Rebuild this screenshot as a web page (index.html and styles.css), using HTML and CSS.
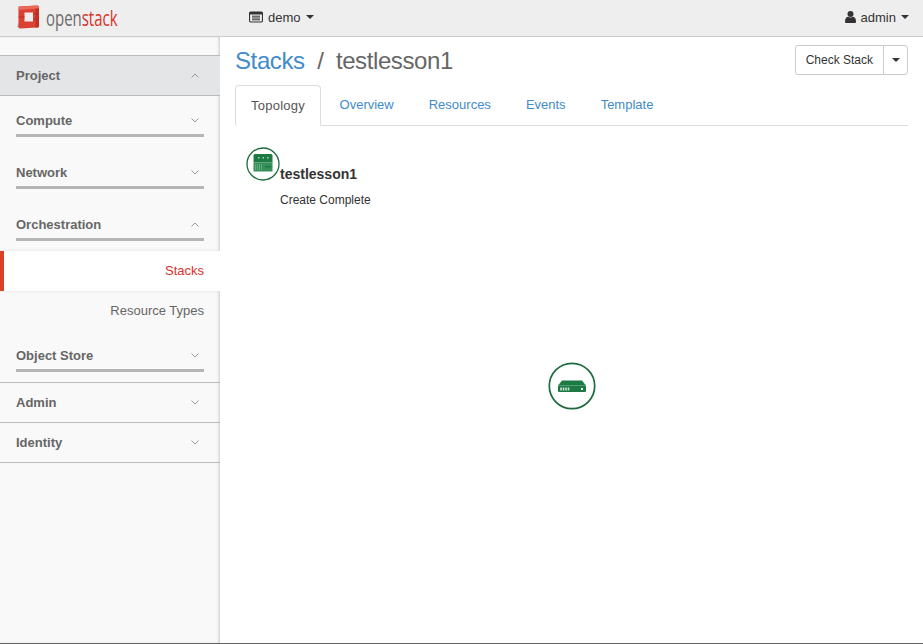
FILE: index.html
```html
<!DOCTYPE html>
<html lang="en">
<head>
    <meta charset="UTF-8">
    <meta name="viewport" content="width=device-width, initial-scale=1.0">
    <title>Stack Details - OpenStack Dashboard</title>
    <link rel="stylesheet" href="styles.css">
</head>
<body>
    <header class="navbar">
        <a class="brand" href="#">
            <svg class="brand-logo" width="24" height="24" viewBox="0 0 24 24">
                <path d="M1 22 L3 17 L5 23 Z" fill="#b5b5b5"/>
                <path fill-rule="evenodd" d="M2.500 2.500 Q2.500 1.500 3.500 1.500 L21 0.500 Q23 0.500 23 2 V21 Q23 22.500 21 22.500 L4.500 23.500 Q2.500 23.500 2.500 22 Z M8.500 7.500 V16.500 H17 V7.500 Z" fill="#da4133"/>
                <path d="M2.500 2.500 Q2.500 1.500 3.500 1.500 L21 0.500 Q23 0.500 23 2 V3.500 L2.500 5 Z" fill="#e96a5c"/>
                <path d="M19.500 3.500 H23 V21 Q23 22.500 21 22.500 L19.500 22.600 Z" fill="#c22f25"/>
                <path d="M2.500 12 H8.500 M17 9 H23 M17 14 H23" stroke="#b82c22" stroke-width="1"/>
            </svg>
            <span class="brand-name">open<span class="brand-accent">stack</span></span>
        </a>
        <div class="nav-project">
            <svg class="server-icon" width="14" height="12" viewBox="0 0 14 12">
                <rect x="0.5" y="1" width="13" height="10" rx="1.5" fill="none" stroke="#333" stroke-width="1.2"/>
                <rect x="1" y="1" width="12" height="2.5" fill="#333"/>
                <path d="M3 5.2 H11 M3 7 H11 M3 8.800 H11" stroke="#333" stroke-width="1"/>
            </svg>
            <span>demo</span>
            <span class="caret"></span>
        </div>
        <div class="nav-user">
            <svg class="user-icon" width="11" height="12" viewBox="0 0 11 12">
                <circle cx="5.500" cy="3" r="3" fill="#333"/>
                <path d="M0 11 Q0 6 3 5.800 Q5.500 7.400 8 5.800 Q11 6 11 11 Q11 12 10 12 H1 Q0 12 0 11 Z" fill="#333"/>
            </svg>
            <span>admin</span>
            <span class="caret"></span>
        </div>
    </header>

    <div class="page">
        <nav class="sidebar">
            <div class="dash-head">
                <span>Project</span>
                <svg class="chev" width="8" height="5" viewBox="0 0 8 5"><path d="M0.500 4.500 L4 1 L7.500 4.500" fill="none" stroke="#999" stroke-width="1"/></svg>
            </div>
            <div class="panel-head first">
                <span>Compute</span>
                <svg class="chev" width="8" height="5" viewBox="0 0 8 5"><path d="M0.500 0.500 L4 4 L7.500 0.500" fill="none" stroke="#999" stroke-width="1"/></svg>
            </div>
            <div class="panel-head">
                <span>Network</span>
                <svg class="chev" width="8" height="5" viewBox="0 0 8 5"><path d="M0.500 0.500 L4 4 L7.500 0.500" fill="none" stroke="#999" stroke-width="1"/></svg>
            </div>
            <div class="panel-head">
                <span>Orchestration</span>
                <svg class="chev" width="8" height="5" viewBox="0 0 8 5"><path d="M0.500 4.500 L4 1 L7.500 4.500" fill="none" stroke="#999" stroke-width="1"/></svg>
            </div>
            <a class="side-link active" href="#">Stacks</a>
            <a class="side-link" href="#">Resource Types</a>
            <div class="panel-head last">
                <span>Object Store</span>
                <svg class="chev" width="8" height="5" viewBox="0 0 8 5"><path d="M0.500 0.500 L4 4 L7.500 0.500" fill="none" stroke="#999" stroke-width="1"/></svg>
            </div>
            <div class="dash-head closed">
                <span>Admin</span>
                <svg class="chev" width="8" height="5" viewBox="0 0 8 5"><path d="M0.500 0.500 L4 4 L7.500 0.500" fill="none" stroke="#999" stroke-width="1"/></svg>
            </div>
            <div class="dash-head closed">
                <span>Identity</span>
                <svg class="chev" width="8" height="5" viewBox="0 0 8 5"><path d="M0.500 0.500 L4 4 L7.500 0.500" fill="none" stroke="#999" stroke-width="1"/></svg>
            </div>
        </nav>

        <main class="content">
            <div class="page-header">
                <h1><a href="#">Stacks</a><span class="sep">/</span>testlesson1</h1>
                <div class="btn-group">
                    <button class="btn">Check Stack</button>
                    <button class="btn btn-caret"><span class="caret"></span></button>
                </div>
            </div>

            <ul class="tabs">
                <li class="tab active">Topology</li>
                <li class="tab">Overview</li>
                <li class="tab">Resources</li>
                <li class="tab">Events</li>
                <li class="tab">Template</li>
            </ul>

            <div class="topology">
                <div class="stack-info">
                    <svg class="stack-icon" width="34" height="34" viewBox="0 0 34 34">
                        <circle cx="17" cy="17" r="16" fill="#fff" stroke="#1d6b3c" stroke-width="1.300"/>
                        <path d="M9 7 H25 Q26.500 7 26.500 8.500 V15.500 H7.500 V8.500 Q7.500 7 9 7 Z" fill="#1d7a43"/>
                        <rect x="7.500" y="15.500" width="19" height="9" fill="#37905a"/>
                        <path d="M9 18 H17 M9 20 H17 M9 22 H17" stroke="#8fc2a3" stroke-width="1" stroke-dasharray="1 1"/>
                        <rect x="19" y="19" width="6" height="1.500" fill="#1d7a43"/>
                        <rect x="12" y="10" width="1.500" height="1.500" fill="#a8d0b8"/>
                        <rect x="16.500" y="10" width="1.500" height="1.500" fill="#a8d0b8"/>
                        <rect x="21" y="10" width="1.500" height="1.500" fill="#a8d0b8"/>
                    </svg>
                    <div class="stack-text">
                        <div class="stack-name">testlesson1</div>
                        <div class="stack-status">Create Complete</div>
                    </div>
                </div>
                <svg class="node-icon" width="48" height="48" viewBox="0 0 48 48">
                    <circle cx="24" cy="24" r="22.700" fill="#fff" stroke="#1d6b3c" stroke-width="1.700"/>
                    <path d="M14 18.500 H34 L38 23.500 H10 Z" fill="#1d7a43"/>
                    <path d="M10 23.500 H38 V29 Q38 30 37 30 H11 Q10 30 10 29 Z" fill="#1d7a43"/>
                    <path d="M13 25.500 V28.500 M15.500 25.500 V28.500 M18 25.500 V28.500 M20.500 25.500 V28.500" stroke="#cde3d5" stroke-width="1.600"/>
                    <rect x="33" y="26" width="2" height="2" fill="#fff"/>
                </svg>
            </div>
        </main>
    </div>
</body>
</html>
```

FILE: styles.css
```css
* {
    box-sizing: border-box;
}

html, body {
    height: 644px;
    overflow: hidden;
}

body {
    margin: 0;
    font-family: 'Liberation Sans', Arial, sans-serif;
    font-size: 13px;
    color: #333;
    background: #fff;
    display: flex;
    flex-direction: column;
}

a {
    text-decoration: none;
}

.navbar {
    height: 37px;
    flex: none;
    display: flex;
    align-items: center;
    background: #eee;
    border-bottom: 1px solid #ccc;
    padding: 0 14px 2px 16px;
}

.brand {
    display: flex;
    align-items: center;
    width: 233px;
    gap: 6px;
}

.brand-name {
    display: inline-block;
    font-family: 'Open Sans', sans-serif;
    font-size: 22px;
    color: #6b6b6b;
    transform: scaleX(0.68);
    transform-origin: left center;
}

.brand-accent {
    color: #d9322a;
}

.nav-project, .nav-user {
    display: flex;
    align-items: center;
    gap: 5px;
}

.nav-user {
    margin-left: auto;
}

.caret {
    display: inline-block;
    width: 0;
    height: 0;
    border-top: 4px solid #333;
    border-left: 4px solid transparent;
    border-right: 4px solid transparent;
}

.page {
    flex: 1;
    display: flex;
    min-height: 0;
    border-bottom: 1px solid #666;
}

.sidebar {
    width: 220px;
    flex: none;
    padding-top: 18px;
    background: #f9f9f9;
    box-shadow: inset -2px 0 3px -1px #c8c8c8;
    font-weight: bold;
    color: #666;
}

.sidebar svg {
    display: block;
}

.dash-head {
    height: 41px;
    display: flex;
    align-items: center;
    justify-content: space-between;
    padding: 0 21px 0 16px;
    background: #e4e5e7;
    border-top: 1px solid #bbb;
    border-bottom: 1px solid #bbb;
}

.dash-head.closed {
    height: 40px;
    background: none;
    border-top: none;
}

.panel-head {
    height: 52px;
    margin: 0 16px;
    padding: 21px 5px 0 0;
    display: flex;
    align-items: center;
    justify-content: space-between;
    border-bottom: 3px solid #b5b5b5;
}

.panel-head.first {
    height: 41px;
    padding-top: 10px;
}

.panel-head.last {
    height: 41px;
    padding-top: 10px;
    margin-bottom: 10px;
}

.panel-head.last + .dash-head.closed {
    height: 41px;
    border-top: 1px solid #bbb;
}

.side-link {
    display: flex;
    align-items: center;
    justify-content: flex-end;
    height: 40px;
    padding: 0 16px 2px 0;
    font-weight: normal;
    color: #666;
}

.side-link.active {
    margin-top: 10px;
    color: #d9322a;
    background: #fff;
    border-left: 4px solid #da4127;
    box-shadow: 0 0 3px #ddd;
}

.content {
    position: relative;
    flex: 1;
    min-width: 0;
    padding: 0 15px;
    background: #fff;
}

.page-header {
    display: flex;
    align-items: center;
    justify-content: space-between;
    height: 48px;
}

h1 {
    margin: 0;
    font-size: 24px;
    font-weight: normal;
    letter-spacing: -0.4px;
    color: #666;
}

h1 a {
    color: #428bca;
}

.sep {
    margin: 0 12.5px;
}

.btn-group {
    display: flex;
    margin-bottom: 2px;
}

.btn {
    height: 30px;
    padding: 0 10px;
    font: inherit;
    font-size: 12px;
    color: #333;
    background: #fff;
    border: 1px solid #ccc;
    border-radius: 3px 0 0 3px;
}

.btn-caret {
    width: 25px;
    padding: 0;
    margin-left: -1px;
    border-radius: 0 3px 3px 0;
}

.btn-caret .caret {
    display: block;
    margin: 0 auto;
}

.tabs {
    display: flex;
    margin: 0;
    padding: 0;
    list-style: none;
    height: 41px;
    border-bottom: 1px solid #ddd;
}

.tab {
    height: 41px;
    padding: 12px 17.5px 0;
    color: #428bca;
}

.tab.active {
    margin-right: 1px;
    padding: 12px 15px 0;
    letter-spacing: 0.25px;
    color: #555;
    background: #fff;
    border: 1px solid #ddd;
    border-bottom-color: #fff;
    border-radius: 4px 4px 0 0;
}

.topology {
    position: relative;
    height: 500px;
}

.stack-info {
    position: absolute;
    left: 11px;
    top: 21px;
    display: flex;
}

.stack-text {
    padding-top: 19px;
}

.stack-name {
    font-size: 14px;
    font-weight: bold;
    color: #333;
}

.stack-status {
    margin-top: 11px;
    font-size: 12px;
}

.node-icon {
    position: absolute;
    left: 313px;
    top: 236px;
}
```
